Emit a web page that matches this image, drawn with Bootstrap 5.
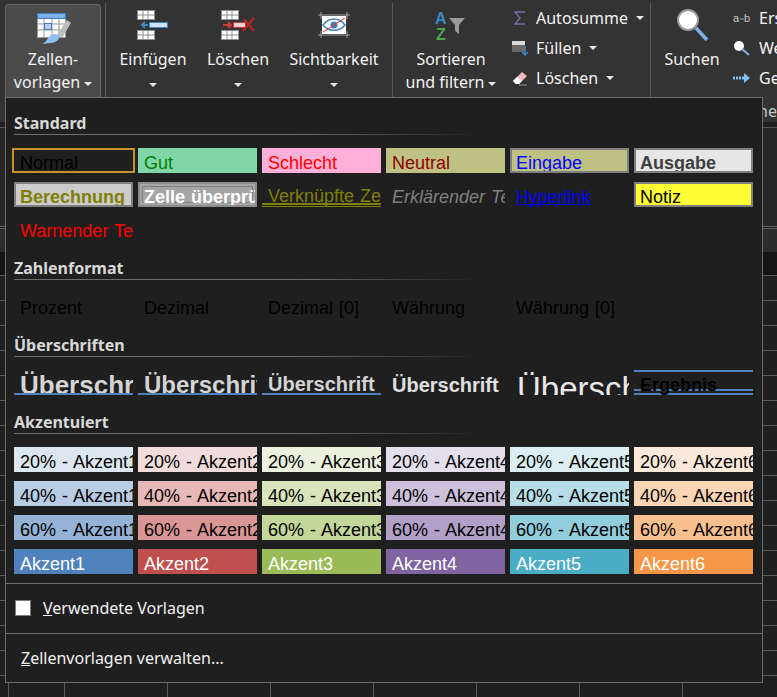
<!DOCTYPE html>
<html lang="de">

<head>
    <meta charset="UTF-8">
    <meta name="viewport" content="width=device-width, initial-scale=1">
    <title>Zellenvorlagen</title>
    <link href="https://cdn.jsdelivr.net/npm/bootstrap@5.3.3/dist/css/bootstrap.min.css" rel="stylesheet">
    <style>
        html, body { height: 697px; overflow: hidden; }
        body { background: #1f1f1f; font-family: "Noto Sans", sans-serif; color: #f2f2f2; position: relative; width: 777px; }
        .ribbon { height: 122px; background: #333; font-size: 16px; line-height: 23px; width: 777px; overflow: hidden; }
        .rb-row { height: 97px; }
        .rb-label { height: 25px; padding-top: 4px; text-align: right; color: #c8c8c8; font-size: 16px; line-height: 21px; }
        .rb-big { display: flex; flex-direction: column; align-items: center; text-align: center; flex: none; }
        .rb-icon { height: 40px; margin-top: 5px; margin-bottom: 3px; display: flex; align-items: center; justify-content: center; }
        .caret { display: inline-block; width: 0; height: 0; border-left: 4px solid transparent; border-right: 4px solid transparent; border-top: 4px solid #e8e8e8; vertical-align: middle; }
        .rb-active { width: 96px; height: 93px; margin: 4px 0 0 5px; background: #4b4b4b; border: 1px solid #686868; border-bottom: 0; border-radius: 4px 4px 0 0; }
        .rb-active .rb-icon { margin-top: 6px; height: 34px; margin-bottom: 3px; }
        .rb-sep { width: 1px; height: 94px; margin-top: 3px; background: #5a5a5a; flex: none; }
        .sb-formula { height: 105px; background: #262626; border-top: 5px solid #1f1f1f; box-shadow: inset 0 1px 0 #555; border-bottom: 1px solid #5c5c5c; }
        .sb-heads { height: 47px; background: linear-gradient(#2b2b2b 23px, #141414 23px); border-top: 1px solid #5c5c5c; margin-top: 1px; }
        .sheet { height: 423px; background-color: #1f1f1f;
            background-image: repeating-linear-gradient(to bottom, #5c5c5c 0 1px, transparent 1px 25px), repeating-linear-gradient(to right, #5c5c5c 0 1px, transparent 1px 103px);
            background-position: 0 0, 64px 0; }
        .styles-menu { position: absolute; left: 5px; top: 97px; width: 758px; height: 586px; background: #1f1f1f; border: 1px solid #6e6e6e; padding: 0; margin: 0; border-radius: 0; display: block; color: #f2f2f2; }
        .sec-head { position: absolute; left: 8px; width: 466px; height: 23px; font-weight: 700; font-size: 16px; line-height: 22px; color: #d8d8d8; background: linear-gradient(to right, #6e6e6e 60%, transparent) bottom left / 100% 1px no-repeat; }
        .cell-grid { position: absolute; left: 8px; display: grid; grid-template-columns: repeat(6, 119px); grid-auto-rows: 25px; column-gap: 5px; row-gap: 9px; font-family: "Liberation Sans", sans-serif; font-size: 18px; word-spacing: 1px; }
        .xc { position: relative; overflow: hidden; white-space: nowrap; line-height: 21px; padding: 5px 0 0 6px; color: #000; }
        .boxed { border: 2px solid #7f7f7f; padding: 3px 0 0 4px; }
        .c-normal { margin: 0 -2px; border: 2px solid #c8922a; padding: 3px 0 0 6px; }
        .c-gut { background: #80d6a8; color: #008000; }
        .c-schlecht { background: #ffb0d8; color: #ff0000; }
        .c-neutral { background: #bfc083; color: #8f0000; }
        .c-eingabe { background: #bfc083; color: #0000ff; }
        .c-ausgabe { background: #e6e6e6; color: #3f3f3f; font-weight: 700; }
        .c-berech { background: #cccccc; color: #808000; font-weight: 700; }
        .c-pruef { background: #a5a5a5; color: #fff; font-weight: 700; border: 2px solid #8c8c8c; padding: 3px 0 0 4px; box-shadow: inset 0 0 0 2px #a5a5a5, inset 0 0 0 3px #7f7f7f; }
        .c-link { color: #808000; padding-top: 4px; background: linear-gradient(#808000, #808000) 0 21px / 100% 2px no-repeat, linear-gradient(#808000, #808000) 0 24px / 100% 1px no-repeat; }
        .c-erkl { color: #7f7f7f; font-style: italic; }
        .c-hyper { color: #0000ff; text-decoration: underline 1px; text-underline-offset: 1px; text-decoration-skip-ink: none; }
        .c-notiz { background: #ffff33; color: #000; }
        .c-warn { color: #ff0000; }
        .h-line { border-bottom: 2px solid #4f81bd; color: #d4d4d4; font-weight: 700; padding-top: 0; }
        .h1x { font-size: 26px; line-height: 31px; }
        .h2x { font-size: 24px; line-height: 30px; }
        .h3x { font-size: 20px; line-height: 29px; }
        .h4x { font-size: 20px; line-height: 30px; color: #e0e0e0; font-weight: 700; padding-top: 0; }
        .h5x { font-size: 33px; line-height: 31px; color: #e8e8e8; padding: 3px 0 0 7px; }
        .h6x { font-weight: 700; padding: 5px 0 0 6px; background: linear-gradient(#4f81bd, #4f81bd) 0 0 / 100% 2px no-repeat, linear-gradient(#4f81bd, #4f81bd) 0 19px / 100% 2px no-repeat, linear-gradient(#4f81bd, #4f81bd) 0 23px / 100% 2px no-repeat; }
        .a1a { background: #dce6f1; } .a1b { background: #b8cce4; } .a1c { background: #95b3d7; } .a1d { background: #4f81bd; color: #fff; }
        .a2a { background: #f2dcdb; } .a2b { background: #e6b8b7; } .a2c { background: #da9694; } .a2d { background: #c0504d; color: #fff; }
        .a3a { background: #ebf1de; } .a3b { background: #d8e4bc; } .a3c { background: #c4d79b; } .a3d { background: #9bbb59; color: #fff; }
        .a4a { background: #e4dfec; } .a4b { background: #ccc0da; } .a4c { background: #b1a0c7; } .a4d { background: #8064a2; color: #fff; }
        .a5a { background: #daeef3; } .a5b { background: #b7dee8; } .a5c { background: #92cddc; } .a5d { background: #4bacc6; color: #fff; }
        .a6a { background: #fde9d9; } .a6b { background: #fcd5b4; } .a6c { background: #fabf8f; } .a6d { background: #f79646; color: #fff; }
        .menu-rule { position: absolute; left: 0; right: 0; height: 1px; background: #6e6e6e; }
        .menu-entry { position: absolute; font-size: 16px; line-height: 24px; color: #f2f2f2; }
        .menu-check.form-check-input[type=checkbox] { width: 16px; height: 16px; background: #fff; border: 1px solid #7a7a7a; border-radius: 0; margin: 0; position: absolute; left: 9px; top: 502px; }
        .side-col { font-size: 16px; line-height: 30px; flex: none; }
        .side-row { height: 30px; white-space: nowrap; }
        .side-row svg { flex: none; }
    </style>
</head>

<body>
    <div class="ribbon">
        <div class="rb-row d-flex">
            <div class="rb-big rb-active">
                <div class="rb-icon">
                    <svg width="36" height="33" viewBox="0 0 36 33">
                        <rect x="2.5" y="1.5" width="28" height="24" fill="#fff" stroke="#999"/>
                        <rect x="2.5" y="1.5" width="28" height="5" fill="#7fb0ea" stroke="#3f7fbf"/>
                        <path d="M3 12h27M3 18h27M9 7v18M17 7v18M24 7v18" stroke="#999" fill="none"/>
                        <rect x="9.5" y="11.5" width="7" height="6" fill="#b7d2f4" stroke="#3f7fbf"/>
                        <path d="M32 8l4 3-9 15-5-3z" fill="#bdbdbd"/>
                        <path d="M7 32c4-1 5-6 9-9 3-2 7-1 8 1 1 4-4 7-8 7z" fill="#8fc0f5"/>
                    </svg>
                </div>
                <div>Zellen-<br>vorlagen<span class="caret ms-1"></span></div>
            </div>
            <div class="rb-sep ms-1"></div>
            <div class="rb-big" style="width:94px">
                <div class="rb-icon">
                    <svg width="34" height="32" viewBox="0 0 34 32">
                        <g fill="#fff" stroke="#8f8f8f">
                            <rect x="1.5" y="1.5" width="17" height="9"/>
                            <rect x="1.5" y="21.5" width="17" height="9"/>
                        </g>
                        <path d="M7 1v10M12 1v10M1 6h18M7 21v10M12 21v10M1 26h18" stroke="#8f8f8f"/>
                        <rect x="13.5" y="13.5" width="18" height="5" fill="#cfe2f7" stroke="#3f86c4"/>
                        <path d="M12 16H6M9 13l-3 3 3 3" stroke="#3f86c4" stroke-width="2" fill="none"/>
                    </svg>
                </div>
                <div>Einfügen</div>
                <div class="lh-1 mt-1"><span class="caret"></span></div>
            </div>
            <div class="rb-big" style="width:76px">
                <div class="rb-icon">
                    <svg width="36" height="32" viewBox="0 0 36 32">
                        <g fill="#fff" stroke="#8f8f8f">
                            <rect x="1.5" y="1.5" width="17" height="9"/>
                            <rect x="1.5" y="21.5" width="17" height="9"/>
                        </g>
                        <path d="M7 1v10M12 1v10M1 6h18M7 21v10M12 21v10M1 26h18" stroke="#8f8f8f"/>
                        <path d="M3 16h7M8 13l3 3-3 3" stroke="#d23a3a" stroke-width="2" fill="none"/>
                        <rect x="13.5" y="13.5" width="12" height="5" fill="#f4cfcf" stroke="#d23a3a"/>
                        <path d="M24 10l10 12M34 9L23 22" stroke="#b8282c" stroke-width="2" fill="none"/>
                    </svg>
                </div>
                <div>Löschen</div>
                <div class="lh-1 mt-1"><span class="caret"></span></div>
            </div>
            <div class="rb-big" style="width:116px">
                <div class="rb-icon">
                    <svg width="32" height="26" viewBox="0 0 32 26">
                        <rect x="4" y="4" width="24" height="18" fill="#fff"/>
                        <path d="M0 3h32M3 0v7M29 0v7M0 23h32M3 19v7M29 19v7" stroke="#a0a0a0" fill="none"/>
                        <path d="M5 13c6-8 16-8 22 0-6 7-16 7-22 0z" fill="none" stroke="#3f7fbf" stroke-width="1.5"/>
                        <circle cx="16" cy="13" r="3.5" fill="#3f7fbf"/>
                        <path d="M5 20L27 6" stroke="#e23a3a"/>
                    </svg>
                </div>
                <div>Sichtbarkeit</div>
                <div class="lh-1 mt-1"><span class="caret"></span></div>
            </div>
            <div class="rb-sep"></div>
            <div class="rb-big" style="width:116px">
                <div class="rb-icon">
                    <svg width="32" height="32" viewBox="0 0 32 32">
                        <text x="0" y="15" font-family="Liberation Sans, sans-serif" font-weight="700" font-size="16" fill="#3f86c4">A</text>
                        <text x="1" y="31" font-family="Liberation Sans, sans-serif" font-weight="700" font-size="16" fill="#4ca64c">Z</text>
                        <path d="M14 9h16l-6 7v9l-4-3v-6z" fill="#9a9a9a"/>
                    </svg>
                </div>
                <div>Sortieren<br>und filtern<span class="caret ms-1"></span></div>
            </div>
            <div class="side-col" style="width:141px;padding:3px 0 0 3px">
                <div class="side-row d-flex align-items-center gap-2">
                    <svg width="16" height="16" viewBox="0 0 16 16"><path d="M13 2H3l5 6-5 6h10" fill="none" stroke="#6f6fa8" stroke-width="1.5"/></svg>
                    <span>Autosumme</span><span class="caret"></span>
                </div>
                <div class="side-row d-flex align-items-center gap-2">
                    <svg width="16" height="16" viewBox="0 0 16 16"><rect x="0" y="1" width="13" height="11" fill="#d8d8d8"/><rect x="0" y="5" width="13" height="7" fill="#666"/><path d="M13 6v9M10 12l3 3 3-3" stroke="#3f86c4" stroke-width="1.5" fill="none"/></svg>
                    <span>Füllen</span><span class="caret"></span>
                </div>
                <div class="side-row d-flex align-items-center gap-2">
                    <svg width="16" height="16" viewBox="0 0 16 16"><path d="M1 11l9-9 5 4-8 8H4z" fill="#f0b8c0"/><path d="M1 11l4-4 5 4-3 3H4z" fill="#fff"/><path d="M7 15h8" stroke="#999"/></svg>
                    <span>Löschen</span><span class="caret"></span>
                </div>
            </div>
            <div class="rb-sep"></div>
            <div class="rb-big" style="width:82px">
                <div class="rb-icon">
                    <svg width="34" height="36" viewBox="0 0 34 36"><circle cx="13" cy="13" r="10" fill="#fff" stroke="#9a9a9a" stroke-width="2"/><path d="M21 21l11 12" stroke="#7fb0ea" stroke-width="3.5"/></svg>
                </div>
                <div>Suchen</div>
            </div>
            <div class="side-col" style="width:120px;padding-top:3px">
                <div class="side-row d-flex align-items-center gap-2">
                    <svg width="18" height="12" viewBox="0 0 18 12"><text x="0" y="10" font-family="Liberation Sans, sans-serif" font-size="11" fill="#ccc">a</text><text x="11" y="10" font-family="Liberation Sans, sans-serif" font-size="11" fill="#ccc">b</text><path d="M7 7h4" stroke="#7fb0ea"/></svg>
                    <span>Ersetzen</span>
                </div>
                <div class="side-row d-flex align-items-center gap-2">
                    <svg width="18" height="16" viewBox="0 0 18 16"><circle cx="6" cy="6" r="5" fill="#fff"/><path d="M9 9l7 6" stroke="#7fb0ea" stroke-width="2"/></svg>
                    <span>Weitersuchen</span>
                </div>
                <div class="side-row d-flex align-items-center gap-2">
                    <svg width="18" height="12" viewBox="0 0 18 12"><path d="M0 6h11" stroke="#7fc0f5" stroke-width="3" stroke-dasharray="2 1"/><path d="M11 1l6 5-6 5z" fill="#7fc0f5"/></svg>
                    <span>Gehe zu</span>
                </div>
            </div>
        </div>
        <div class="rb-label">ne</div>
    </div>
    <div class="sb-formula"></div>
    <div class="sb-heads"></div>
    <div class="sheet"></div>

    <div class="dropdown-menu show styles-menu">
        <div class="sec-head" style="top:14px">Standard</div>
        <div class="cell-grid" style="top:50px">
            <div class="xc c-normal">Normal</div>
            <div class="xc c-gut">Gut</div>
            <div class="xc c-schlecht">Schlecht</div>
            <div class="xc c-neutral">Neutral</div>
            <div class="xc boxed c-eingabe">Eingabe</div>
            <div class="xc boxed c-ausgabe">Ausgabe</div>
            <div class="xc boxed c-berech">Berechnung</div>
            <div class="xc c-pruef">Zelle überprüfen</div>
            <div class="xc c-link">Verknüpfte Zelle</div>
            <div class="xc c-erkl">Erklärender Text</div>
            <div class="xc c-hyper">Hyperlink</div>
            <div class="xc boxed c-notiz">Notiz</div>
            <div class="xc c-warn">Warnender Text</div>
        </div>

        <div class="sec-head" style="top:159px">Zahlenformat</div>
        <div class="cell-grid" style="top:195px">
            <div class="xc">Prozent</div>
            <div class="xc">Dezimal</div>
            <div class="xc">Dezimal [0]</div>
            <div class="xc">Währung</div>
            <div class="xc">Währung [0]</div>
        </div>

        <div class="sec-head" style="top:236px">Überschriften</div>
        <div class="cell-grid" style="top:272px">
            <div class="xc h-line h1x">Überschrift 1</div>
            <div class="xc h-line h2x">Überschrift 2</div>
            <div class="xc h-line h3x">Überschrift 3</div>
            <div class="xc h4x">Überschrift 4</div>
            <div class="xc h5x">Überschrift</div>
            <div class="xc h6x">Ergebnis</div>
        </div>

        <div class="sec-head" style="top:313px">Akzentuiert</div>
        <div class="cell-grid" style="top:349px">
            <div class="xc a1a">20% - Akzent1</div>
            <div class="xc a2a">20% - Akzent2</div>
            <div class="xc a3a">20% - Akzent3</div>
            <div class="xc a4a">20% - Akzent4</div>
            <div class="xc a5a">20% - Akzent5</div>
            <div class="xc a6a">20% - Akzent6</div>
            <div class="xc a1b">40% - Akzent1</div>
            <div class="xc a2b">40% - Akzent2</div>
            <div class="xc a3b">40% - Akzent3</div>
            <div class="xc a4b">40% - Akzent4</div>
            <div class="xc a5b">40% - Akzent5</div>
            <div class="xc a6b">40% - Akzent6</div>
            <div class="xc a1c">60% - Akzent1</div>
            <div class="xc a2c">60% - Akzent2</div>
            <div class="xc a3c">60% - Akzent3</div>
            <div class="xc a4c">60% - Akzent4</div>
            <div class="xc a5c">60% - Akzent5</div>
            <div class="xc a6c">60% - Akzent6</div>
            <div class="xc a1d">Akzent1</div>
            <div class="xc a2d">Akzent2</div>
            <div class="xc a3d">Akzent3</div>
            <div class="xc a4d">Akzent4</div>
            <div class="xc a5d">Akzent5</div>
            <div class="xc a6d">Akzent6</div>
        </div>

        <div class="menu-rule" style="top:485px"></div>
        <input class="form-check-input menu-check" type="checkbox" aria-label="Verwendete Vorlagen">
        <div class="menu-entry" style="left:37px;top:498px"><u>V</u>erwendete Vorlagen</div>
        <div class="menu-rule" style="top:535px"></div>
        <div class="menu-entry" style="left:15px;top:548px"><u>Z</u>ellenvorlagen verwalten...</div>
    </div>

    <script src="https://cdn.jsdelivr.net/npm/bootstrap@5.3.3/dist/js/bootstrap.bundle.min.js"></script>
</body>

</html>
